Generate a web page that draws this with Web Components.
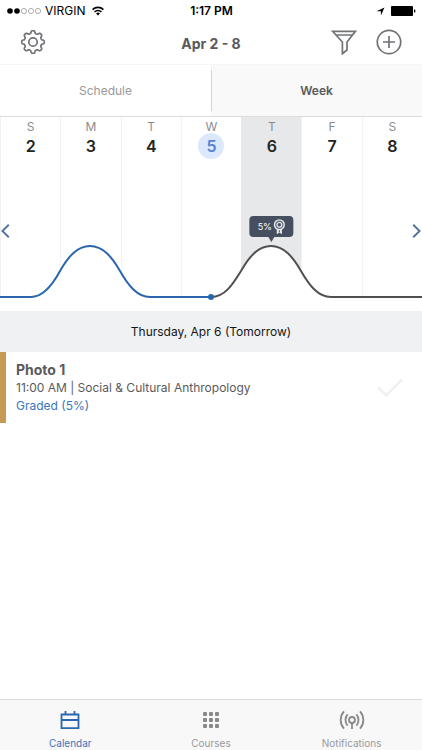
<!DOCTYPE html>
<html lang="en">
<head>
<meta charset="utf-8">
<meta name="viewport" content="width=device-width, initial-scale=1">
<title>Calendar</title>
<style>
  body { margin: 0; background: #fff; font-family: Inter, "Liberation Sans", sans-serif; color: #5a5a5c; }
</style>
</head>
<body>
<calendar-app></calendar-app>
<script>
const base = `<style>
  *, *::before, *::after { box-sizing: border-box; }
  button { font: inherit; color: inherit; background: none; border: 0; padding: 0; margin: 0; cursor: pointer; }
  svg { display: block; }
  h1, h2, h3, p { margin: 0; font: inherit; }
</style>`;

function define(name, markup, setup) {
  customElements.define(name, class extends HTMLElement {
    constructor() {
      super();
      this.attachShadow({ mode: 'open' }).innerHTML = base + markup;
    }
    connectedCallback() { if (setup) setup(this, this.shadowRoot); }
  });
}

define('status-bar', `<style>
  :host { display: grid; grid-template-columns: 1fr auto 1fr; align-items: center; height: 22px; padding: 0 6px 0 7px; color: #000; font-size: 12px; line-height: 16px; }
  .left, .right { display: flex; align-items: center; }
  .left { gap: 3px; }
  .right { justify-content: flex-end; gap: 6px; }
  .wifi { margin-left: 4px; }
  .time { font-weight: 600; }
</style>
<div class="left">
  <svg width="35" height="8" viewBox="0 0 35 8" fill="none" stroke="#8c8c8c" stroke-width=".7"><circle cx="3" cy="4" r="2.8" fill="#000" stroke="none"/><circle cx="10" cy="4" r="2.8" fill="#000" stroke="none"/><circle cx="17" cy="4" r="2.6"/><circle cx="24" cy="4" r="2.6"/><circle cx="31" cy="4" r="2.6"/></svg>
  <span>VIRGIN</span>
  <svg class="wifi" width="12" height="10" viewBox="0 0 12 10" fill="none" stroke="#000" stroke-width="1.6"><path d="M.6 3.6a7.6 7.6 0 0 1 10.8 0M2.6 5.9a4.8 4.8 0 0 1 6.8 0"/><path d="M4.1 7.4a2.7 2.7 0 0 1 3.8 0L6 9.4z" fill="#000" stroke="none"/></svg>
</div>
<span class="time">1:17 PM</span>
<div class="right">
  <svg width="9" height="9" viewBox="0 0 9 9"><path d="M8.5.5 4.9 8.6V4.2H.5z"/></svg>
  <svg width="25" height="10" viewBox="0 0 25 10"><rect width="22" height="10" rx="1"/><path d="M23 3.2q1.5.2 1.5 1.8T23 6.8z"/></svg>
</div>`);

define('app-header', `<style>
  :host { display: grid; grid-template-columns: 1fr auto 1fr; align-items: center; height: 43px; padding: 0 20px; border-bottom: 1px solid #f5f5f5; }
  h1 { padding-top: 2px; font-size: 14px; line-height: 20px; font-weight: 700; }
  .actions { display: flex; justify-content: flex-end; gap: 19px; }
  svg { fill: none; stroke: #717377; stroke-width: 1.7; }
  button { justify-self: start; padding-bottom: 2px; }
</style>
<button aria-label="Settings"><svg width="26" height="26" viewBox="0 0 26 26" stroke-linejoin="round"><circle cx="13" cy="13" r="4.2"/><path id="gear"/></svg></button>
<h1><slot></slot></h1>
<div class="actions">
  <button aria-label="Filter"><svg width="26" height="26" viewBox="0 0 26 26"><path d="M1.6 2.3h22.8L16 13v8l-4.6 3.7V13zM4.5 6h17"/></svg></button>
  <button aria-label="Add"><svg width="26" height="26" viewBox="0 0 26 26"><circle cx="13" cy="13" r="11.7"/><path d="M13 7v12M7 13h12"/></svg></button>
</div>`, (host, root) => {
  // Eight rounded teeth, traced as one closed outline.
  const pts = [];
  for (let i = 0; i < 192; i++) {
    const a = i / 192 * Math.PI * 2 - Math.PI / 2;
    const r = 10 + 1.3 * Math.tanh(2 * Math.cos(8 * a));
    pts.push((13 + r * Math.cos(a)).toFixed(2) + ' ' + (13 + r * Math.sin(a)).toFixed(2));
  }
  root.getElementById('gear').setAttribute('d', 'M' + pts.join('L') + 'Z');
});

define('view-tabs', `<style>
  :host { display: grid; grid-template-columns: 1fr 1fr; height: 52px; border-bottom: 1px solid #dcdcde; font-size: 12px; line-height: 18px; }
  button { color: #97989a; }
  button[aria-selected=true] { position: relative; background: #f9f9f9; color: #5a5a5c; font-weight: 600; }
  button[aria-selected=true]::before { content: ""; position: absolute; left: 0; top: 5px; bottom: 5px; width: 1px; background: #d4d4d6; }
</style>
<button role="tab" aria-selected="false">Schedule</button>
<button role="tab" aria-selected="true">Week</button>`, host => host.setAttribute('role', 'tablist'));

define('week-day', `<style>
  :host { display: flex; flex-direction: column; align-items: center; padding-top: 2px; border-left: 1px solid #f2f2f3; font-size: 12px; line-height: 16px; color: #8b8c8e; }
  .date { display: grid; place-items: center; width: 26px; height: 26px; margin-top: -2px; border-radius: 50%; font-size: 16px; line-height: 20px; font-weight: 600; color: #242424; }
  :host([today]) .date { background: #dce8fb; color: #5585d2; }
  :host([selected]) { background: #e7e8e9; border-color: #e7e8e9; }
</style>
<span><slot name="name"></slot></span><span class="date"><slot></slot></span>`);

define('week-chart', `<style>
  :host { display: grid; position: relative; height: 194px; }
  .days { display: grid; grid-template-columns: repeat(7, 1fr); grid-area: 1 / 1; }
  .curve { grid-area: 1 / 1; width: 100%; height: 194px; pointer-events: none; }
  path { vector-effect: non-scaling-stroke; }
  .today { position: absolute; left: 50%; top: 177px; width: 6px; height: 6px; margin-left: -3px; border-radius: 50%; background: #2468b4; }
  .tip { position: absolute; left: calc(100% * 9 / 14); top: 99px; transform: translateX(-50%); display: flex; align-items: center; gap: 1px; height: 21px; padding: 0 8px; border-radius: 4px; background: #454f5f; color: #fff; font-size: 9px; line-height: 14px; }
  .tip::after { content: ""; position: absolute; left: calc(50% - 3px); top: 100%; border: solid transparent; border-width: 5px 3px 0; border-top-color: #454f5f; }
  .nav { position: absolute; top: 107px; }
  .nav svg { fill: none; stroke: #50749f; stroke-width: 1.9; }
  .prev { left: 1px; } .next { right: 1px; }
</style>
<div class="days"><slot></slot></div>
<svg class="curve" viewBox="0 0 422 194" preserveAspectRatio="none" fill="none" stroke-width="2" aria-hidden="true">
  <path fill="#fff" d="M0 180H31C44 180 53 167 60 154C68 140 77 129 90 129S112 140 120 154S137 180 150 180H211C225 180 233 167 241 154C249 140 258 129 271 129S293 140 301 154S318 180 331 180H422V194H0Z"/>
  <path stroke="#2b66ad" d="M0 180H31C44 180 53 167 60 154C68 140 77 129 90 129S112 140 120 154S137 180 150 180H211"/>
  <path stroke="#505052" d="M211 180C225 180 233 167 241 154C249 140 258 129 271 129S293 140 301 154S318 180 331 180H422"/>
</svg>
<span class="today"></span>
<div class="tip"><span>5%</span><svg width="12" height="16" viewBox="0 0 12 16" fill="none" stroke="#e5e8ec"><path d="M3.4 9.5v5.7L6 13.4l2.6 1.8V9.5" fill="#e5e8ec" stroke="none"/><circle cx="6" cy="5.8" r="4.9" fill="#69717d" stroke-width="1.4"/><circle cx="6" cy="5.8" r="2.3" fill="#454f5f" stroke-width="1.2"/><path d="M6 11.3v1.8" stroke="#454f5f"/></svg></div>
<button class="nav prev" aria-label="Previous week"><svg width="9" height="14" viewBox="0 0 9 14"><path d="M7.8.8 1.4 7l6.4 6.2"/></svg></button>
<button class="nav next" aria-label="Next week"><svg width="9" height="14" viewBox="0 0 9 14"><path d="M1.2.8 7.6 7l-6.4 6.2"/></svg></button>`);

define('date-heading', `<style>
  :host { display: block; padding: 12px 0 11px; background: #f0f1f3; color: #151515; text-align: center; }
  h2 { font-size: 12px; line-height: 18px; }
</style><h2><slot></slot></h2>`);

define('event-row', `<style>
  :host { display: flex; align-items: center; justify-content: space-between; padding: 9px 18px 8px 10px; border-left: 6px solid #c69a55; font-size: 12px; line-height: 18px; }
  h3 { font-size: 14px; font-weight: 700; }
  .grade { color: #3a74bd; }
</style>
<div><h3><slot name="title"></slot></h3><p><slot></slot></p><p class="grade"><slot name="grade"></slot></p></div>
<button aria-label="Mark as done"><svg width="28" height="20" viewBox="0 0 28 20" fill="none" stroke="#f0f0f0" stroke-width="2.6"><path d="m2 9.5 8.3 7.8L25.8 1.6"/></svg></button>`);

define('nav-item', `<style>
  :host { display: grid; }
  a { display: flex; flex-direction: column; align-items: center; justify-content: flex-end; gap: 6px; color: #98999b; text-decoration: none; font-size: 10px; line-height: 14px; }
  :host([current]) a { color: #3a74bd; }
</style>
<a href="#"><slot name="icon"></slot><span><slot></slot></span></a>`);

define('calendar-app', `<style>
  :host { display: flex; flex-direction: column; min-height: 100vh; }
  main { flex: 1; }
  nav { display: grid; grid-template-columns: repeat(3, 1fr); position: sticky; bottom: 0; height: 51px; border-top: 1px solid #dcdcde; background: #f8f8f9; }
</style>
<status-bar></status-bar>
<app-header>Apr 2 - 8</app-header>
<view-tabs></view-tabs>
<main>
  <week-chart>
    <week-day><span slot="name">S</span>2</week-day>
    <week-day><span slot="name">M</span>3</week-day>
    <week-day><span slot="name">T</span>4</week-day>
    <week-day today><span slot="name">W</span>5</week-day>
    <week-day selected><span slot="name">T</span>6</week-day>
    <week-day><span slot="name">F</span>7</week-day>
    <week-day><span slot="name">S</span>8</week-day>
  </week-chart>
  <date-heading>Thursday, Apr 6 (Tomorrow)</date-heading>
  <event-row><span slot="title">Photo 1</span>11:00 AM | Social &amp; Cultural Anthropology<span slot="grade">Graded (5%)</span></event-row>
</main>
<nav>
  <nav-item current><svg slot="icon" width="20" height="20" viewBox="0 0 20 20" fill="none" stroke="#2b66b0" stroke-width="1.8"><path d="M1.5 4.5h17v13.6h-17zM1.5 10h17M5.5 1v3.5M14.5 1v3.5"/></svg>Calendar</nav-item>
  <nav-item><svg slot="icon" width="20" height="20" viewBox="0 0 20 20" fill="#88898b"><g id="r"><rect x="2" y="2" width="4" height="4" rx="1"/><rect x="8" y="2" width="4" height="4" rx="1"/><rect x="14" y="2" width="4" height="4" rx="1"/></g><use href="#r" y="6"/><use href="#r" y="12"/></svg>Courses</nav-item>
  <nav-item><svg slot="icon" width="26" height="20" viewBox="0 0 26 20" fill="none" stroke="#88898b" stroke-width="1.8"><circle cx="13" cy="10" r="3"/><path d="M13 13v6M8.6 4.4a8.5 8.5 0 0 0 0 11.2M17.4 4.4a8.5 8.5 0 0 1 0 11.2M5 1.3a13 13 0 0 0 0 17.4M21 1.3a13 13 0 0 1 0 17.4"/></svg>Notifications</nav-item>
</nav>`);
</script>
</body>
</html>
